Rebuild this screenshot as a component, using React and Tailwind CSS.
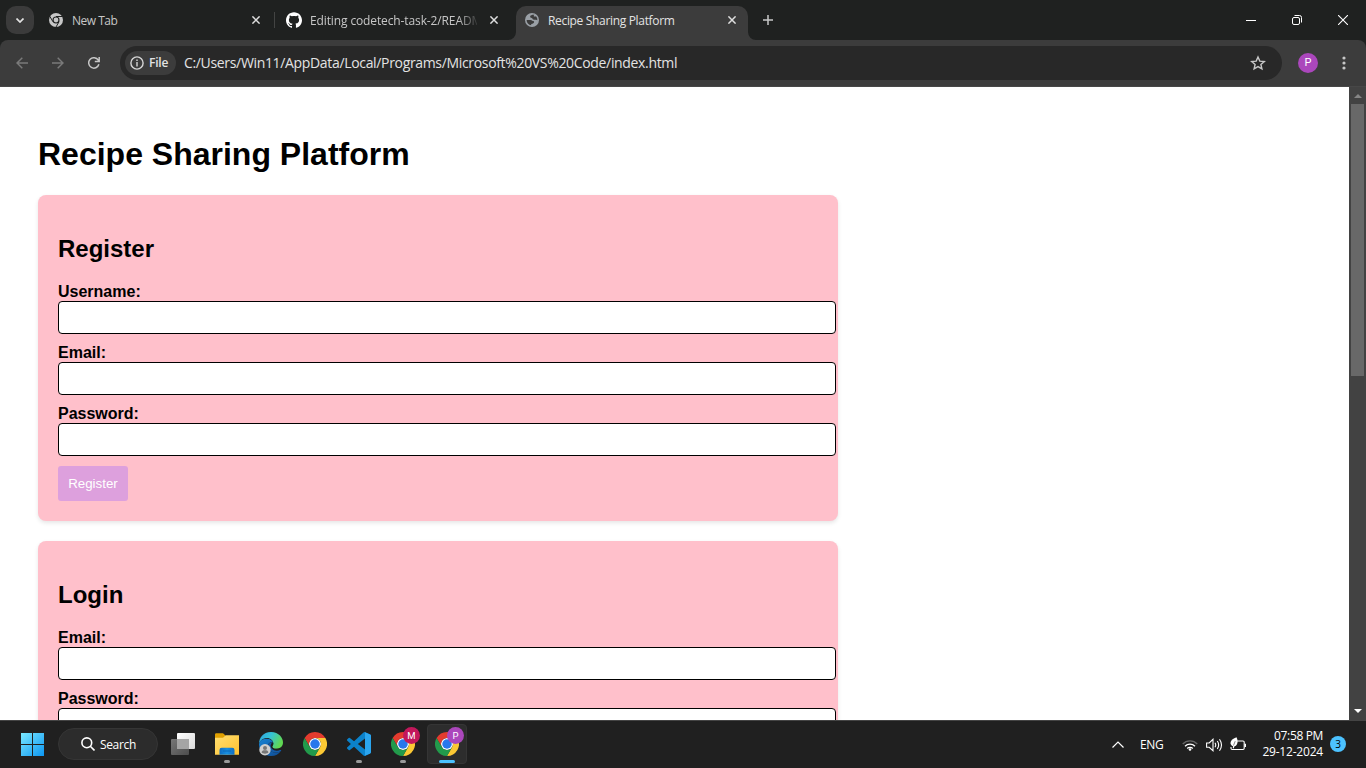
import React from "react";
import { SiGithub } from "react-icons/si";

const ChromeLogo = ({ className }) => (
  <svg viewBox="0 0 48 48" className={className}>
    <circle cx="24" cy="24" r="12" fill="#fff" />
    <path fill="#e33b2e" d="M24,12H44.7812a23.9939,23.9939,0,0,0-41.5639.0029L13.6079,30l.0093-.0024A11.9852,11.9852,0,0,1,24,12Z" />
    <path fill="#fcc934" d="M34.3913,30.0029,24.0007,48A23.994,23.994,0,0,0,44.78,12.0031H23.9989l-.0025.0093A11.985,11.985,0,0,1,34.3913,30.0029Z" />
    <path fill="#229a4b" d="M13.6086,30.0031,3.218,12.006A23.994,23.994,0,0,0,24.0025,48L34.3931,30.0029l-.0067-.0068a11.9852,11.9852,0,0,1-20.7778.007Z" />
    <circle cx="24" cy="24" r="9.5" fill="#2777ec" />
  </svg>
);

const ChromeMono = () => (
  <svg viewBox="0 0 48 48" className="size-[14px] shrink-0">
    <circle cx="24" cy="24" r="24" fill="#c7c7c7" />
    <circle cx="24" cy="24" r="12" fill="#1f2120" />
    <path d="M24 12H46M13.6 30L2.6 11M34.4 30L24 48" stroke="#1f2120" strokeWidth="3.4" fill="none" />
    <circle cx="24" cy="24" r="8.2" fill="#c7c7c7" />
  </svg>
);

const Globe = () => (
  <svg viewBox="0 0 14 14" className="size-[14px] shrink-0">
    <circle cx="7" cy="7" r="7" fill="#9aa0a6" />
    <path
      fill="#3c3c3c"
      d="M9.600 1.700C7.500 1.500 5.600 2 5.200 3.200C4.900 4.300 5.600 4.800 6.800 4.900C7.600 5 7.400 6.100 8.300 6.500C9.300 6.900 11 6.300 12.300 7.200C12.500 5.700 12 4.300 11 3.200C10.300 3.700 9.200 3.700 8.800 3.200C8.500 2.700 9 2.100 9.600 1.700ZM1.600 7C1.600 9.700 3.600 12 6.200 12.300V11C7.100 11 7.900 10.600 8.700 9.900C9.400 9.300 9.200 8.300 8.300 8.100C7.200 7.900 6.900 7 5.600 6.900Z"
    />
  </svg>
);

const Cross = ({ className }) => (
  <svg viewBox="0 0 8 8" className={className}>
    <path d="M.4 .4L7.6 7.6M7.6 .4L.4 7.6" stroke="#dedede" strokeWidth="1.5" fill="none" />
  </svg>
);

function TabStrip() {
  return (
    <div className="flex h-10 w-full shrink-0 bg-[#1f2120] text-[12px] text-[#c7c7c7]">
      <div className="ml-[6px] mt-[6px] flex size-7 items-center justify-center rounded-[10px] bg-[#3b3b3b]">
        <svg viewBox="0 0 8 5" className="h-[5px] w-2">
          <path d="M.5 .5L4 4L7.500 .5" fill="none" stroke="#e3e3e3" strokeWidth="1.7" />
        </svg>
      </div>
      <div className="flex h-10 w-[240px] items-center pl-[15px]">
        <ChromeMono />
        <span className="ml-[9px] grow pt-px tracking-[-0.5px]">New Tab</span>
        <Cross className="mr-[14px] size-2" />
      </div>
      <div className="mt-3 h-4 w-px bg-[#434443]" />
      <div className="flex h-10 w-[233px] items-center pl-[11px]">
        <SiGithub className="size-4 shrink-0 text-white" />
        <span className="ml-2 w-[167px] overflow-hidden whitespace-nowrap pt-px tracking-[-0.12px] [mask-image:linear-gradient(to_right,black_148px,transparent_170px)]">
          Editing codetech-task-2/README.md
        </span>
        <Cross className="ml-[13px] size-2" />
      </div>
      <svg viewBox="0 0 8 8" className="mt-8 size-2 shrink-0">
        <path d="M8 0V8H0A8 8 0 0 0 8 0Z" fill="#3c3c3c" />
      </svg>
      <div className="mt-[6px] flex h-[34px] w-[232px] items-center rounded-t-[10px] bg-[#3c3c3c] pb-[6px] pl-[9px] text-[#e3e3e3]">
        <Globe />
        <span className="ml-[9px] grow pt-px tracking-[-0.33px]">Recipe Sharing Platform</span>
        <Cross className="mr-3 size-2" />
      </div>
      <svg viewBox="0 0 8 8" className="mt-8 size-2 shrink-0">
        <path d="M0 0V8H8A8 8 0 0 1 0 0Z" fill="#3c3c3c" />
      </svg>
      <svg viewBox="0 0 10 10" className="ml-[7px] mt-[15px] size-[10px]">
        <path d="M5 0V10M0 5H10" stroke="#c7c7c7" strokeWidth="1.500" />
      </svg>
      <div className="ml-auto flex h-10 items-center text-white">
        <svg viewBox="0 0 10 10" className="mr-9 size-[10px]" shapeRendering="crispEdges">
          <path d="M0 5.500H10" stroke="#fff" />
        </svg>
        <svg viewBox="0 0 10 10" className="mr-9 size-[10px]">
          <rect x=".5" y="2.500" width="7" height="7" rx="1.500" fill="none" stroke="#fff" />
          <path d="M2.500 .5H7.500A2 2 0 0 1 9.500 2.500V7.500" fill="none" stroke="#fff" />
        </svg>
        <svg viewBox="0 0 10 10" className="mr-[18px] size-[10px]">
          <path d="M0 0L10 10M10 0L0 10" stroke="#fff" strokeWidth="1.100" />
        </svg>
      </div>
    </div>
  );
}

function Toolbar() {
  return (
    <div className="h-[47px] w-full shrink-0 bg-[#1f2120]">
      <div className="flex h-[47px] items-start rounded-t-lg border-b border-[#474747] bg-[#3c3c3c] pt-[6px]">
        <svg viewBox="0 0 12 12" className="ml-4 mt-[11px] size-3" fill="none" stroke="#7a7a7a" strokeWidth="1.500">
          <path d="M12 6H1M6.300 .7L1 6L6.300 11.300" />
        </svg>
        <svg viewBox="0 0 12 12" className="ml-6 mt-[11px] size-3" fill="none" stroke="#7a7a7a" strokeWidth="1.500">
          <path d="M0 6H11M5.700 .7L11 6L5.700 11.300" />
        </svg>
        <svg viewBox="0 0 12 12" className="ml-6 mt-[11px] size-3" fill="none" stroke="#c7c7c7" strokeWidth="1.500">
          <path d="M10.900 7.300A5.200 5.200 0 1 1 10.300 3.200L10.900 4.300M11.200 0V4.600H6.800" />
        </svg>
        <div className="ml-5 flex h-[34px] w-[1162px] items-center rounded-full bg-[#282828] pl-[5px]">
          <div className="flex h-6 w-[51px] items-center rounded-full bg-[#3c3c3c] pl-[5px]">
            <svg viewBox="0 0 14 14" className="size-[14px]" fill="none" stroke="#d6d6d6" strokeWidth="1.400">
              <circle cx="7" cy="7" r="6.100" />
              <path d="M7 6V10.500M7 3.500V5" />
            </svg>
            <span className="ml-[5px] text-[12px] font-semibold tracking-[-0.2px] text-[#e3e3e3]">File</span>
          </div>
          <span className="ml-2 grow pb-px text-[14px] tracking-[-0.335px] text-[#e3e3e3]">
            C:/Users/Win11/AppData/Local/Programs/Microsoft%20VS%20Code/index.html
          </span>
          <svg viewBox="0 0 16 16" className="mr-4 size-4" fill="none" stroke="#c7c7c7" strokeWidth="1.400">
            <path d="M8 2L9.800 6.100L14.300 6.500L10.900 9.500L11.900 13.900L8 11.600L4.100 13.900L5.100 9.500L1.700 6.500L6.200 6.100Z" />
          </svg>
        </div>
        <div className="ml-4 mt-[7px] flex size-5 items-center justify-center rounded-full bg-[#ab47bc] pt-px font-['Roboto',sans-serif] text-[11px] text-white">P</div>
        <svg viewBox="0 0 4 14" className="ml-6 mt-[10px] h-[14px] w-1" fill="#c7c7c7">
          <circle cx="2" cy="2" r="1.600" />
          <circle cx="2" cy="7" r="1.600" />
          <circle cx="2" cy="12" r="1.600" />
        </svg>
      </div>
    </div>
  );
}

const Field = ({ label, type }) => (
  <label className="mb-[10px] block text-[16px] font-bold leading-[18px]">
    {label}
    <input type={type} className="block h-[33px] w-[778px] rounded border border-black bg-white px-2 font-normal" />
  </label>
);

const Card = ({ title, children }) => (
  <section className="mb-5 w-[800px] shrink-0 rounded-lg bg-[#ffc0cb] p-5 shadow-[0_2px_4px_rgba(0,0,0,0.1)]">
    <h2 className="my-5 text-[24px] font-bold leading-7">{title}</h2>
    {children}
  </section>
);

const Submit = ({ children }) => (
  <button className="block h-[35px] w-[70px] rounded-[3px] bg-[#dda0dd] text-[13.333px] leading-[15px] text-white">{children}</button>
);

function Page() {
  return (
    <div className="flex h-[633px] w-full shrink-0 overflow-hidden bg-white">
      <main className="h-full grow overflow-hidden pl-[38px] pt-[49px] font-['Liberation_Sans',Arial,sans-serif] text-black">
        <h1 className="mb-[22px] text-[32px] font-bold leading-[37px]">Recipe Sharing Platform</h1>
        <Card title="Register">
          <Field label="Username:" type="text" />
          <Field label="Email:" type="email" />
          <Field label="Password:" type="password" />
          <Submit>Register</Submit>
        </Card>
        <Card title="Login">
          <Field label="Email:" type="email" />
          <Field label="Password:" type="password" />
        </Card>
      </main>
      <div className="flex h-full w-[17px] shrink-0 flex-col items-center bg-[#424242]">
        <svg viewBox="0 0 8 4" className="mt-[7px] h-1 w-2"><path d="M4 0L8 4H0Z" fill="#858585" /></svg>
        <div className="mt-[6px] h-[272px] w-[13px] bg-[#686868]" />
        <svg viewBox="0 0 8 4" className="mb-[7px] mt-auto h-1 w-2"><path d="M4 4L8 0H0Z" fill="#fff" /></svg>
      </div>
    </div>
  );
}

const TaskItem = ({ children, running, active }) => (
  <div className={`flex h-10 w-10 shrink-0 flex-col items-center rounded ${active ? "border border-[#353535] bg-[#2d2d2d]" : "border border-transparent"}`}>
    <div className="relative mt-[7px] size-6">{children}</div>
    <div className={`mt-[4px] h-[3px] rounded-full ${active ? "w-4 bg-[#4cc2ff]" : running ? "w-[6px] bg-[#9a9a9a]" : "w-0"}`} />
  </div>
);

const Badge = ({ letter, className }) => (
  <div className={`absolute -right-[5px] -top-[5px] flex size-[17px] items-center justify-center rounded-full pt-px font-['Roboto',sans-serif] text-[9.5px] text-white ${className}`}>{letter}</div>
);

const Folder = () => (
  <svg viewBox="0 0 24 24" className="size-6">
    <defs>
      <linearGradient id="folder" x1="0" y1="0" x2="1" y2="1"><stop stopColor="#ffdf72" /><stop offset="1" stopColor="#ffc12e" /></linearGradient>
      <linearGradient id="pocket" x1="0" y1="0" x2="1" y2="0"><stop stopColor="#0f6cc0" /><stop offset=".5" stopColor="#178fe0" /><stop offset="1" stopColor="#0f6cc0" /></linearGradient>
    </defs>
    <path d="M0 2.500A1.200 1.200 0 0 1 1.200 1.300H8L10.500 3.500V8H0Z" fill="#e0a000" />
    <path d="M0 5.700H8L10.800 3.200H24V22.700H0Z" fill="url(#folder)" />
    <path d="M4.500 22.700V18A2.200 2.200 0 0 1 6.700 15.800H17.300A2.200 2.200 0 0 1 19.500 18V22.700Z" fill="url(#pocket)" />
    <path d="M8 19H16" stroke="#0d66b5" strokeWidth="1" />
  </svg>
);

const Edge = () => (
  <svg viewBox="0 0 24 24" className="size-6">
    <defs>
      <linearGradient id="edgeTop" x1="0" y1="0" x2="1" y2=".4"><stop stopColor="#2b9fe0" /><stop offset=".5" stopColor="#35c3d5" /><stop offset="1" stopColor="#60d853" /></linearGradient>
      <linearGradient id="edgeLow" x1="0" y1="0" x2="1" y2="1"><stop stopColor="#1683d5" /><stop offset="1" stopColor="#104a91" /></linearGradient>
    </defs>
    <path d="M0 12C0 6 4 0 12 0s12 6 12 10.500c0 4-3.200 6.300-6.500 6.300-2.700 0-4.300-1-4.300-2.100 0-.8 1.200-1.300 1.200-3.200C14.400 8.500 11.500 6 8 6 4 6 .8 8.700 0 12Z" fill="url(#edgeTop)" />
    <path d="M0 12.200C.6 8.600 4 6.800 7.700 6.800c3.700 0 5.900 1.800 6.400 3.700C10.700 9.600 9 11.800 9 14c0 4 3.600 6.500 7.500 6.500 2.500 0 4.200-.8 5.500-1.800C19.800 22.300 16.500 24 12 24 5 24 0 18.700 0 12.200Z" fill="url(#edgeLow)" />
    <path d="M9 14c0 4 3.600 6.500 7.500 6.500 2.500 0 4.500-.9 5.500-1.800.5-.6.200-1.200-.5-.9-4.700 2-9.500-.2-9.500-4.800 0-1 .500-1.900 1.200-2.600C10.600 10.200 9 11.800 9 14Z" fill="#135ba9" />
    <path d="M14.200 11C14.500 13 13.200 13.600 13.200 14.700C13.200 15.800 14.800 16.800 17.500 16.800C18.900 16.800 20.200 16.400 21.300 15.700L22.300 17.400C18 19.700 12 18.300 11.600 13.800C11.500 12.500 12.800 11.200 14.200 11Z" fill="#202020" />
    <circle cx="6" cy="17.800" r="5.700" fill="#cfcfcf" />
    <circle cx="6" cy="15.900" r="2" fill="#777" />
    <path d="M2.600 20.600C2.600 18.700 4 18.200 6 18.200s3.400.5 3.400 2.400C8.300 22 3.700 22 2.600 20.600Z" fill="#777" />
  </svg>
);

const VsCode = () => (
  <svg viewBox="0 0 24 24" className="size-6">
    <path fill="#0b82cb" d="M23.15 2.587L18.21.21a1.494 1.494 0 0 0-1.705.29l-9.46 8.63-4.12-3.128a.999.999 0 0 0-1.276.057L.327 7.261A1 1 0 0 0 .326 8.74L3.899 12 .326 15.26a1 1 0 0 0 .001 1.479L1.65 17.94a.999.999 0 0 0 1.276.057l4.12-3.128 9.46 8.63a1.492 1.492 0 0 0 1.704.29l4.942-2.377A1.5 1.5 0 0 0 24 20.06V3.939a1.5 1.5 0 0 0-.85-1.352zm-5.146 14.861L10.826 12l7.178-5.448v10.896z" />
    <path fill="#2ba5ee" d="M18.004 .15L23.150 2.587A1.500 1.500 0 0 1 24 3.939V20.060A1.500 1.500 0 0 1 23.150 21.412L18.004 23.850Z" />
  </svg>
);

function Taskbar() {
  return (
    <div className="flex h-12 w-full shrink-0 border-t border-[#444] bg-[#202020] text-[12px] text-white">
      <svg viewBox="0 0 23 23" className="ml-[21px] mt-[12px] size-[23px]">
        <defs>
          <linearGradient id="win" gradientUnits="userSpaceOnUse" x1="0" y1="0" x2="23" y2="23"><stop stopColor="#7ae8ff" /><stop offset="1" stopColor="#0c96f2" /></linearGradient>
        </defs>
        <path fill="url(#win)" d="M0 0H11V11H0ZM12 0H23V11H12ZM0 12H11V23H0ZM12 12H23V23H12Z" />
      </svg>
      <div className="ml-[14px] mt-[7px] flex h-8 w-[100px] items-center rounded-full border border-[#353535] bg-[#2c2c2c] pl-[22px]">
        <svg viewBox="0 0 14 14" className="size-[14px]" fill="none" stroke="#fff" strokeWidth="1.600">
          <circle cx="5.800" cy="5.800" r="4.900" />
          <path d="M9.300 9.300L13.500 13.500" />
        </svg>
        <span className="ml-[5px] pt-[2px] tracking-[-0.35px]">Search</span>
      </div>
      <div className="ml-[5px] mt-[3px] flex gap-1">
        <TaskItem>
          <svg viewBox="0 0 24 24" className="size-6">
            <defs>
              <linearGradient id="taskFront" x1="0" y1="0" x2="1" y2="1"><stop stopColor="#fff" /><stop offset="1" stopColor="#dadada" /></linearGradient>
              <linearGradient id="taskBack" x1="0" y1="0" x2="1" y2="1"><stop stopColor="#777" /><stop offset="1" stopColor="#4d4d4d" /></linearGradient>
            </defs>
            <rect x="0" y="7" width="18" height="16" rx="1" fill="url(#taskBack)" />
            <rect x="6" y="1" width="18" height="16" rx="1" fill="url(#taskFront)" />
            <path d="M6 7H18V17H6Z" fill="#a5a5a5" />
          </svg>
        </TaskItem>
        <TaskItem running><Folder /></TaskItem>
        <TaskItem><Edge /></TaskItem>
        <TaskItem><ChromeLogo className="size-6" /></TaskItem>
        <TaskItem running><VsCode /></TaskItem>
        <TaskItem running><ChromeLogo className="size-6" /><Badge letter="M" className="bg-[#c2185b]" /></TaskItem>
        <TaskItem active><ChromeLogo className="size-6" /><Badge letter="P" className="bg-[#ab47bc]" /></TaskItem>
      </div>
      <div className="ml-auto flex items-center">
        <svg viewBox="0 0 12 7" className="mr-4 h-[7px] w-3"><path d="M.5 6.500L6 1L11.500 6.500" fill="none" stroke="#fff" strokeWidth="1.200" /></svg>
        <span className="w-6 whitespace-nowrap tracking-[-0.4px]">ENG</span>
        <svg viewBox="0 0 16 14" className="ml-[18px] h-[14px] w-4" fill="none" strokeWidth="1.300">
          <path d="M.7 6A10 10 0 0 1 15.300 6" stroke="#666" />
          <path d="M3 8.300A6.900 6.900 0 0 1 13 8.300M5.200 10.500A3.900 3.900 0 0 1 10.800 10.500" stroke="#fff" />
          <circle cx="8" cy="11.500" r="1.300" fill="#fff" />
        </svg>
        <svg viewBox="0 0 17 14" className="ml-2 h-[14px] w-[17px]" fill="none" stroke="#fff" strokeWidth="1.100">
          <path d="M.6 5H3.200L7 1.300V12.700L3.200 9.300H.6ZM9 4.700Q10.500 7 9 9.300M11.300 3Q14 7 11.300 11M13.500 1.300Q17.500 7 13.500 12.700" />
        </svg>
        <svg viewBox="0 0 17 14" className="mb-[2px] ml-[7px] h-[14px] w-[17px]">
          <path d="M7 4H13A1.200 1.200 0 0 1 14.200 5.200V11.300A1.200 1.200 0 0 1 13 12.500H2.200A1.200 1.200 0 0 1 1 11.300V10" fill="none" stroke="#fff" strokeWidth="1.100" />
          <path d="M14.500 6.700H16V10H14.500Z" fill="#fff" />
          <path d="M6.500 .3C8.300 3.500 8 8.200 4.500 9.300L3.700 11.500L2.800 11L3 9.300C-1.200 7.500-.2 2.500 6.500 .3Z" fill="#fff" />
          <path d="M5.200 4.200L3.500 8.500" stroke="#555" strokeWidth=".7" />
        </svg>
        <div className="-mt-px ml-[15px] w-[61px] whitespace-nowrap text-right leading-4 tracking-[-0.35px]">
          <div>07:58 PM</div>
          <div className="tracking-[-0.2px]">29-12-2024</div>
        </div>
        <div className="-mt-px ml-[7px] mr-5 flex size-4 items-center justify-center rounded-full bg-[#4cc2ff] text-[10px] text-black">3</div>
      </div>
    </div>
  );
}

export default function App() {
  return (
    <div className="flex h-[768px] w-[1366px] flex-col overflow-hidden font-['Open_Sans','Noto_Sans',sans-serif]">
      <TabStrip />
      <Toolbar />
      <Page />
      <Taskbar />
    </div>
  );
}
